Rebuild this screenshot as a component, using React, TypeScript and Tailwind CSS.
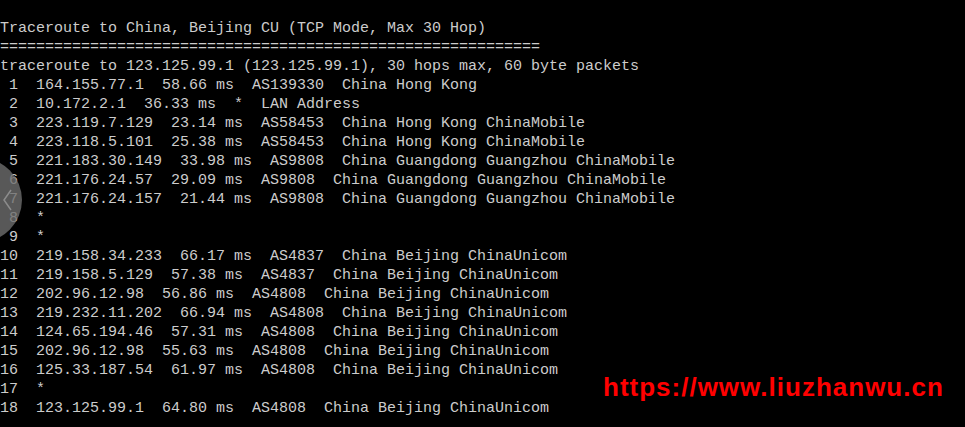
const lines = [
  "Traceroute to China, Beijing CU (TCP Mode, Max 30 Hop)",
  "============================================================",
  "traceroute to 123.125.99.1 (123.125.99.1), 30 hops max, 60 byte packets",
  " 1  164.155.77.1  58.66 ms  AS139330  China Hong Kong",
  " 2  10.172.2.1  36.33 ms  *  LAN Address",
  " 3  223.119.7.129  23.14 ms  AS58453  China Hong Kong ChinaMobile",
  " 4  223.118.5.101  25.38 ms  AS58453  China Hong Kong ChinaMobile",
  " 5  221.183.30.149  33.98 ms  AS9808  China Guangdong Guangzhou ChinaMobile",
  " 6  221.176.24.57  29.09 ms  AS9808  China Guangdong Guangzhou ChinaMobile",
  " 7  221.176.24.157  21.44 ms  AS9808  China Guangdong Guangzhou ChinaMobile",
  " 8  *",
  " 9  *",
  "10  219.158.34.233  66.17 ms  AS4837  China Beijing ChinaUnicom",
  "11  219.158.5.129  57.38 ms  AS4837  China Beijing ChinaUnicom",
  "12  202.96.12.98  56.86 ms  AS4808  China Beijing ChinaUnicom",
  "13  219.232.11.202  66.94 ms  AS4808  China Beijing ChinaUnicom",
  "14  124.65.194.46  57.31 ms  AS4808  China Beijing ChinaUnicom",
  "15  202.96.12.98  55.63 ms  AS4808  China Beijing ChinaUnicom",
  "16  125.33.187.54  61.97 ms  AS4808  China Beijing ChinaUnicom",
  "17  *",
  "18  123.125.99.1  64.80 ms  AS4808  China Beijing ChinaUnicom",
];

export default function App() {
  return (
    <div className="relative w-[965px] h-[427px] overflow-hidden bg-black">
      <pre className="pt-[19px] text-[15px] leading-[19px] text-[#cccccc] font-['Liberation_Mono',monospace]">
        {lines.join("\n")}
      </pre>

      {/* image viewer prev button */}
      <div className="absolute left-[-62px] top-[158px] w-[84px] h-[84px] rounded-full bg-[rgba(110,110,110,0.8)]">
        <svg className="absolute left-[64px] top-[31px]" width="12" height="22" viewBox="0 0 12 22">
          <path d="M9 1 L2 11 L9 21" fill="none" stroke="#8c8c8c" strokeWidth="1.5" />
        </svg>
      </div>

      <div className="absolute left-[603px] top-[374px] text-[26px] leading-[26px] tracking-[1px] font-bold text-[#ff0000] font-['Liberation_Sans',sans-serif]">
        https://www.liuzhanwu.cn
      </div>
    </div>
  );
}
